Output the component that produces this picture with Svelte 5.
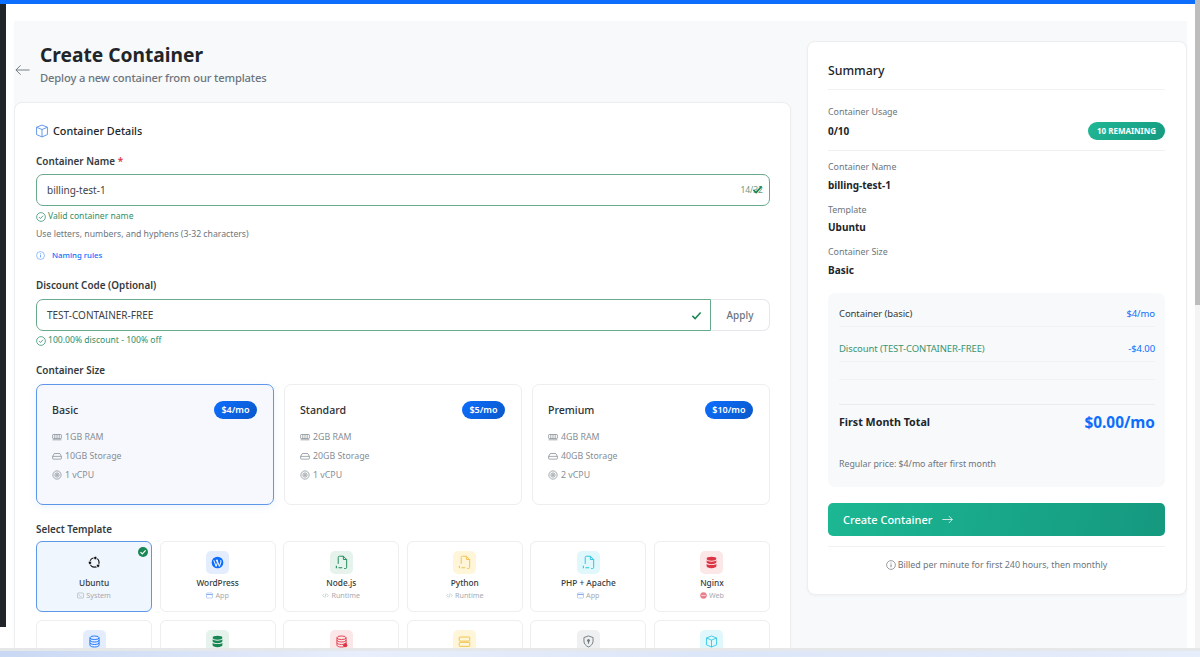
<script>
  const sizes = [
    { name: 'Basic', price: '$4/mo', ram: '1GB RAM', disk: '10GB Storage', cpu: '1 vCPU', selected: true },
    { name: 'Standard', price: '$5/mo', ram: '2GB RAM', disk: '20GB Storage', cpu: '1 vCPU' },
    { name: 'Premium', price: '$10/mo', ram: '4GB RAM', disk: '40GB Storage', cpu: '2 vCPU' }
  ];
  const templates = [
    { name: 'Ubuntu', type: 'System', tint: 'none', icon: 'ubuntu', kind: 'term', selected: true, kc: '#9aa3ad' },
    { name: 'WordPress', type: 'App', tint: '#e3edfd', icon: 'wp', color: '#0d6efd', kind: 'app', kc: '#7fa8ea' },
    { name: 'Node.js', type: 'Runtime', tint: '#e6f2ec', icon: 'file', color: '#198754', kind: 'code', kc: '#8fb8a4' },
    { name: 'Python', type: 'Runtime', tint: '#fff6da', icon: 'file', color: '#f0c14b', kind: 'code', kc: '#8fb8a4' },
    { name: 'PHP + Apache', type: 'App', tint: '#e0f8fc', icon: 'php', color: '#25c2e0', kind: 'app', kc: '#7fa8ea' },
    { name: 'Nginx', type: 'Web', tint: '#fbe6e8', icon: 'dbfill', color: '#dc3545', kind: 'web', kc: '#e8808c' },
    { name: '', type: '', tint: '#e3edfd', icon: 'db', color: '#0d6efd' },
    { name: '', type: '', tint: '#e6f2ec', icon: 'dbfill', color: '#198754' },
    { name: '', type: '', tint: '#fbe6e8', icon: 'dbdot', color: '#dc3545' },
    { name: '', type: '', tint: '#fff6da', icon: 'server', color: '#f0c14b' },
    { name: '', type: '', tint: '#eff0f2', icon: 'shield', color: '#6c757d' },
    { name: '', type: '', tint: '#e0f8fc', icon: 'box', color: '#25c2e0' }
  ];
</script>

{#snippet check(cls)}
  <svg class={cls} viewBox="0 0 16 16" fill="none" stroke="currentColor" stroke-width="1.2"><circle cx="8" cy="8" r="7"/><path d="M4.8 8.2l2.2 2.2 4.2-4.4" stroke-width="1.3"/></svg>
{/snippet}
{#snippet info(cls)}
  <svg class={cls} viewBox="0 0 16 16" fill="none" stroke="currentColor" stroke-width="1.1"><circle cx="8" cy="8" r="7"/><path d="M8 7v4.5" stroke-width="1.4"/><circle cx="8" cy="4.7" r=".9" fill="currentColor" stroke="none"/></svg>
{/snippet}
{#snippet box(cls)}
  <svg class={cls} viewBox="0 0 16 16" fill="none" stroke="currentColor" stroke-width="1.1" stroke-linejoin="round"><path d="M8 1.2l6.2 2.5v8.4L8 14.8 1.8 12.1V3.7z"/><path d="M1.8 3.7L8 6.3l6.2-2.6M8 6.3v8.5"/></svg>
{/snippet}
{#snippet tileIcon(t)}
  {#if t.icon === 'ubuntu'}
    <svg class="tile-svg" viewBox="0 0 16 16" fill="none"><circle cx="8" cy="8" r="5.6" stroke="#111" stroke-width="1.5"/><g fill="#111" stroke="#f0f6fe" stroke-width="1"><circle cx="9" cy="2.4" r="2.1"/><circle cx="2.4" cy="8.4" r="2.1"/><circle cx="12.4" cy="12" r="2.1"/></g></svg>
  {:else if t.icon === 'wp'}
    <svg class="tile-svg" viewBox="0 0 16 16"><circle cx="8" cy="8" r="7.2" fill={t.color}/><path d="M3.4 5.2l2.9 7.6 1.6-4.4-1-3M6 5.2h2.6M7.6 5.4l2.7 7.4 1.9-5.4c.4-1.2-.2-2-.6-2.4" fill="none" stroke="#fff" stroke-width="1.2"/></svg>
  {:else if t.icon === 'file' || t.icon === 'php'}
    <svg class="tile-svg wide" viewBox="0 0 16 16" fill="none" stroke={t.color} stroke-width="1"><path d="M4.5 9.5V2.5A1.2 1.2 0 0 1 5.7 1.3h4.3l3.5 3.5v8.4a1.2 1.2 0 0 1-1.2 1.2h-1.5"/><path d="M10 1.3v3.5h3.5"/><path d="M2.5 11.5v2.6M4.8 13.7h4" stroke-width="1.1"/></svg>
  {:else if t.icon === 'dbfill'}
    <svg class="tile-svg" viewBox="0 0 16 16" fill={t.color}><ellipse cx="8" cy="3.4" rx="6" ry="2.4"/><path d="M2 5.2v2.4c0 1.3 2.7 2.4 6 2.4s6-1.1 6-2.4V5.2c-1 1.2-3.3 1.8-6 1.8s-5-.6-6-1.8z"/><path d="M2 9.4v3.2c0 1.3 2.7 2.4 6 2.4s6-1.1 6-2.4V9.4c-1 1.2-3.3 1.8-6 1.8s-5-.6-6-1.8z"/></svg>
  {:else if t.icon === 'db' || t.icon === 'dbdot'}
    <svg class="tile-svg" viewBox="0 0 16 16" fill="none" stroke={t.color} stroke-width="1.1"><ellipse cx="8" cy="3.4" rx="5.6" ry="2.2"/><path d="M2.4 3.4v9.2c0 1.2 2.5 2.2 5.6 2.2s5.6-1 5.6-2.2V3.4"/><path d="M2.4 6.4c0 1.2 2.5 2.2 5.6 2.2s5.6-1 5.6-2.2M2.4 9.5c0 1.2 2.5 2.2 5.6 2.2s5.6-1 5.6-2.2"/>{#if t.icon === 'dbdot'}<circle cx="12.6" cy="12.6" r="2.6" fill={t.color} stroke="none"/>{/if}</svg>
  {:else if t.icon === 'server'}
    <svg class="tile-svg" viewBox="0 0 16 16" fill="none" stroke={t.color} stroke-width="1.2"><rect x="1.5" y="2.5" width="13" height="5" rx="1"/><rect x="1.5" y="9" width="13" height="5" rx="1"/></svg>
  {:else if t.icon === 'shield'}
    <svg class="tile-svg" viewBox="0 0 16 16" fill="none" stroke={t.color} stroke-width="1.1"><path d="M8 1.2l5.6 1.9v4.4c0 3.4-2.4 5.9-5.6 7.3-3.2-1.4-5.6-3.9-5.6-7.3V3.1z"/><circle cx="8" cy="6.8" r="1.3" fill={t.color}/><path d="M8 7.5v3.2" stroke-width="1.4"/></svg>
  {:else}
    <svg class="tile-svg" viewBox="0 0 16 16" fill="none" stroke={t.color} stroke-width="1" stroke-linejoin="round"><path d="M8 1.2l6.2 2.5v8.4L8 14.8 1.8 12.1V3.7z"/><path d="M1.8 3.7L8 6.3l6.2-2.6M8 6.3v8.5"/></svg>
  {/if}
{/snippet}
{#snippet kindIcon(k, c)}
  <svg class="kind" viewBox="0 0 16 16" fill="none" stroke={c} stroke-width="1.2">
    {#if k === 'term'}<rect x="1.2" y="2.2" width="13.6" height="11.6" rx="1.5"/><path d="M3.6 5.4l2.4 2-2.4 2M7.5 10h3"/>
    {:else if k === 'app'}<rect x="1.2" y="2.2" width="13.6" height="11.6" rx="1.5"/><path d="M1.2 5.8h13.6" stroke-width="2.2"/>
    {:else if k === 'code'}<path d="M5 4.5L1.6 8 5 11.5M11 4.5L14.4 8 11 11.5M9.4 3l-2.8 10"/>
    {:else}<circle cx="8" cy="8" r="7" fill={c}/><path d="M3 8h10" stroke="#fff" stroke-width="1.4"/>{/if}
  </svg>
{/snippet}

<div class="screen">
  <div class="upper">
    <div class="app">
      <div class="topbar"></div>
      <div class="window">
        <div class="rail"></div>
        <div class="gutter">
          <main class="page">
            <div class="col-main">
              <header class="head">
                <svg class="back" viewBox="0 0 16 12" fill="none" stroke="#6c757d" stroke-width="1"><path d="M15.5 6H1M6 1L1 6l5 5"/></svg>
                <div>
                  <h1>Create Container</h1>
                  <p>Deploy a new container from our templates</p>
                </div>
              </header>
              <section class="card details">
                <h2>{@render box('cube')}Container Details</h2>

                <div class="lbl first">Container Name <span class="req">*</span></div>
                <div class="field">
                  <span class="val">billing-test-1</span>
                  <span class="count">14/32</span>
                  <svg class="tick over" viewBox="0 0 16 16"><path d="M2 8.5l4 4 8-9" fill="none" stroke="#198754" stroke-width="2.4"/></svg>
                </div>
                <div class="ok valid">{@render check('ico')}Valid container name</div>
                <div class="hint">Use letters, numbers, and hyphens (3-32 characters)</div>
                <div class="rules">{@render info('ico')}<span>Naming rules</span></div>

                <div class="lbl second">Discount Code (Optional)</div>
                <div class="group">
                  <div class="field flat">
                    <span class="val">TEST-CONTAINER-FREE</span>
                    <svg class="tick" viewBox="0 0 16 16"><path d="M2 8.5l4 4 8-9" fill="none" stroke="#198754" stroke-width="2.2"/></svg>
                  </div>
                  <button class="apply">Apply</button>
                </div>
                <div class="ok">{@render check('ico')}100.00% discount - 100% off</div>

                <div class="lbl third">Container Size</div>
                <div class="sizes">
                  {#each sizes as s}
                    <div class="size" class:on={s.selected}>
                      <div class="size-top"><span class="size-name">{s.name}</span><span class="price">{s.price}</span></div>
                      <div class="spec">
                        <svg viewBox="0 0 16 12" fill="none" stroke="currentColor" stroke-width="1.1"><rect x="1" y="2" width="14" height="6.5" rx="1"/><path d="M4.5 2v6.5M8 2v6.5M11.5 2v6.5M1 10.5h14"/></svg>{s.ram}
                      </div>
                      <div class="spec">
                        <svg viewBox="0 0 16 12" fill="none" stroke="currentColor" stroke-width="1.1"><path d="M3.6 2h8.8L15 6.6V10a1 1 0 0 1-1 1H2a1 1 0 0 1-1-1V6.6zM1 6.6h14"/></svg>{s.disk}
                      </div>
                      <div class="spec">
                        <svg viewBox="0 0 16 16" fill="none" stroke="currentColor" stroke-width="1.1"><circle cx="8" cy="8" r="6.6"/><circle cx="8" cy="8" r="3.4"/><circle cx="8" cy="8" r="1.4"/></svg>{s.cpu}
                      </div>
                    </div>
                  {/each}
                </div>

                <div class="lbl fourth">Select Template</div>
                <div class="tpls">
                  {#each templates as t}
                    <div class="tpl" class:on={t.selected}>
                      {#if t.selected}
                        <span class="badge-ok"><svg viewBox="0 0 10 10"><path d="M2.5 5.2l1.8 1.8 3.3-3.6" fill="none" stroke="#fff" stroke-width="1.2"/></svg></span>
                      {/if}
                      <div class="tile" style:background={t.tint === 'none' ? 'transparent' : t.tint}>{@render tileIcon(t)}</div>
                      <div class="tpl-name">{t.name}</div>
                      {#if t.type}<div class="tpl-type">{@render kindIcon(t.kind, t.kc)}{t.type}</div>{/if}
                    </div>
                  {/each}
                </div>
              </section>
            </div>

            <aside class="card summary">
              <h3>Summary</h3>
              <div class="k usage-k">Container Usage</div>
              <div class="usage">
                <strong>0/10</strong><span class="remain">10 REMAINING</span>
              </div>
              <div class="k name-k">Container Name</div>
              <div class="v">billing-test-1</div>
              <div class="k">Template</div>
              <div class="v">Ubuntu</div>
              <div class="k">Container Size</div>
              <div class="v">Basic</div>

              <div class="bill">
                <div class="row"><span class="dark">Container (basic)</span><span class="blue">$4/mo</span></div>
                <div class="row"><span class="green">Discount (TEST-CONTAINER-FREE)</span><span class="blue">-$4.00</span></div>
                <div class="row spacer"></div>
                <div class="total"><strong>First Month Total</strong><span>$0.00/mo</span></div>
                <div class="regular">Regular price: $4/mo after first month</div>
              </div>

              <button class="create">Create Container
                <svg viewBox="0 0 16 12" fill="none" stroke="#fff" stroke-width="1.1"><path d="M.5 6H15M10 1l5 5-5 5"/></svg>
              </button>
              <div class="billed">{@render info('ico')}Billed per minute for first 240 hours, then monthly</div>
            </aside>
          </main>
        </div>
      </div>
    </div>
    <div class="scroll"><div class="thumb"></div></div>
  </div>
  <div class="taskbar"></div>
</div>

<style>
  :global(body) { margin: 0; background: #fff; }
  * { box-sizing: border-box; }
  .screen { width: 1200px; height: 657px; display: flex; flex-direction: column; overflow: hidden; background: #fff; font-family: "Noto Sans", sans-serif; color: #212529; }
  .upper { flex: 1; min-height: 0; display: flex; }
  .app { flex: 1; min-width: 0; display: flex; flex-direction: column; }
  .topbar { height: 4px; background: #0d6efd; flex: none; }
  .window { flex: 1; min-height: 0; display: flex; }
  .rail { width: 6px; height: 623px; background: #212529; flex: none; }
  .gutter { flex: 1; min-width: 0; padding: 17px 8px 0 8px; overflow: hidden; }
  .page { background: #f8f9fa; display: flex; align-items: flex-start; gap: 16px; height: 700px; }
  .col-main { width: 777px; flex: none; }
  .head { display: flex; align-items: flex-start; height: 81px; padding-top: 20px; }
  .back { width: 15px; height: 12px; margin: 23px 10px 0 1px; flex: none; }
  h1 { margin: 0; font-size: 19.2px; line-height: 28px; font-weight: 700; color: #212529; }
  .head p { margin: 1px 0 0; font-size: 11.2px; line-height: 16px; letter-spacing: -.15px; color: #6c757d; font-weight: 500; }
  .card { background: #fff; border: 1px solid #eceef0; border-radius: 8px; box-shadow: 0 1px 3px rgba(0,0,0,.04); }
  .details { padding: 19px 20px 19px 21px; height: 640px; }
  h2 { margin: 0; display: flex; align-items: center; font-size: 10.8px; line-height: 18px; font-weight: 500; color: #212529; }
  .cube { width: 14px; height: 14px; color: #5f97e8; margin: 0 4px 0 -1px; }
  .lbl { font-size: 9.9px; line-height: 14px; font-weight: 600; color: #343a40; }
  .first { margin-top: 14px; }
  .second { margin-top: 16px; }
  .third { margin-top: 16px; }
  .fourth { margin-top: 17px; }
  .req { color: #dc3545; }
  .field { position: relative; height: 32px; margin-top: 6px; border: 1px solid #69a98c; border-radius: 7px; display: flex; align-items: center; padding-left: 10px; font-size: 10px; color: #3d4349; background: #fff; }
  .val { flex: 1; }
  .count { position: absolute; right: 6px; top: 9px; font-size: 8.5px; color: #6c9a85; }
  .tick { width: 11px; height: 11px; margin-right: 8px; }
  .tick.over { position: absolute; right: -2px; top: 9px; }
  .group { display: flex; margin-top: 7px; }
  .flat { flex: 1; margin: 0; border-radius: 7px 0 0 7px; }
  .apply { width: 59px; height: 32px; border: 1px solid #e5e7ea; border-left: 0; border-radius: 0 7px 7px 0; background: #fff; font: 500 10px "Noto Sans", sans-serif; color: #6c757d; padding: 0; }
  .ok { display: flex; align-items: center; gap: 2px; margin-top: 3px; font-size: 8.6px; line-height: 13px; color: #2f8f69; }
  .ok.valid { margin-top: 4px; }
  .ico { width: 10px; height: 10px; flex: none; }
  .hint { margin-top: 5px; font-size: 8.7px; line-height: 13px; color: #6c757d; }
  .rules { display: flex; align-items: center; gap: 7px; margin-top: 8px; font-size: 7.8px; line-height: 13px; color: #0d6efd; font-weight: 500; }
  .rules .ico { width: 9px; height: 9px; opacity: .7; }
  .sizes { display: grid; grid-template-columns: repeat(3, 1fr); gap: 10px; margin-top: 7px; }
  .size { height: 121px; border: 1px solid #eceef0; border-radius: 7px; padding: 15px 16px 14px 15px; background: #fff; }
  .size.on { border-color: #5f97e8; background: #f6f8fd; box-shadow: 0 2px 8px rgba(13,110,253,.08); }
  .size-top { display: flex; justify-content: space-between; align-items: center; height: 20px; margin-bottom: 7px; }
  .size-name { font-size: 10.6px; font-weight: 500; color: #2b3036; }
  .price { height: 18px; border-radius: 9px; padding: 0 7.5px; font-size: 9px; line-height: 18px; font-weight: 600; color: #fff; background: linear-gradient(135deg, #0d6efd, #0a58ca); }
  .spec { display: flex; align-items: center; gap: 3px; height: 19px; font-size: 8.8px; color: #868e96; }
  .spec svg { width: 10px; height: 10px; flex: none; color: #7b838b; }
  .tpls { display: grid; grid-template-columns: repeat(6, 1fr); gap: 8px 7.4px; margin-top: 5px; }
  .tpl { position: relative; height: 71px; border: 1px solid #eceef0; border-radius: 6px; background: #fff; display: flex; flex-direction: column; align-items: center; padding-top: 9px; }
  .tpl.on { border-color: #5f97e8; background: #f0f6fe; }
  .tile { width: 23px; height: 23px; border-radius: 5px; display: flex; align-items: center; justify-content: center; flex: none; }
  .tile-svg { width: 13px; height: 13px; }
  .tile-svg.wide { width: 15px; height: 15px; }
  .tpl-name { margin-top: 2px; font-size: 8.3px; line-height: 13px; font-weight: 500; color: #343a40; white-space: nowrap; }
  .tpl-type { display: flex; align-items: center; gap: 2px; font-size: 7.2px; line-height: 13px; color: #a5abb1; }
  .kind { width: 7px; height: 7px; }
  .badge-ok { position: absolute; right: 3px; top: 5px; width: 10px; height: 10px; border-radius: 50%; background: #198754; display: flex; }
  .badge-ok svg { width: 10px; height: 10px; }
  .summary { margin-top: 20px; width: 380px; flex: none; height: 554px; padding: 19px 21px 0 20px; }
  h3 { margin: 0; font-size: 12.3px; line-height: 20px; font-weight: 500; color: #212529; padding-bottom: 8px; border-bottom: 1px solid #f1f2f4; }
  .k { font-size: 8.9px; line-height: 14px; color: #6c757d; margin-top: 11px; }
  .usage-k { margin-top: 15px; }
  .name-k { margin-top: 9px; }
  .usage { display: flex; justify-content: space-between; align-items: center; padding: 2px 0 10px; border-bottom: 1px solid #eef0f2; height: 32px; }
  .usage strong { font-size: 10px; font-weight: 700; }
  .remain { height: 18px; padding: 0 9px; border-radius: 9px; font-size: 8px; line-height: 18px; font-weight: 700; color: #fff; background: linear-gradient(135deg, #20b795, #159a80); }
  .v { font-size: 10px; line-height: 14px; margin-top: 3.5px; font-weight: 700; color: #212529; }
  .bill { margin-top: 16px; height: 194px; background: #f8f9fa; border-radius: 7px; padding: 0 10px 0 11px; }
  .row { display: flex; justify-content: space-between; align-items: center; height: 34.5px; padding: 14.5px 0 5px; line-height: 14px; border-bottom: 1px solid #f1f2f4; font-size: 9.5px; letter-spacing: -.1px; }
  .row.spacer { height: 18px; padding: 0; }
  .dark { color: #343a40; }
  .green { color: #3a9471; }
  .blue { color: #0d6efd; }
  .total { display: flex; justify-content: space-between; align-items: center; margin-top: 24px; height: 36px; border-top: 1px solid #e9ecef; }
  .total strong { font-size: 10.7px; font-weight: 700; }
  .total span { font-size: 15.4px; font-weight: 700; color: #0d6efd; }
  .regular { margin-top: 17px; font-size: 8.8px; line-height: 14px; color: #6c757d; }
  .create { display: flex; align-items: center; gap: 10px; width: 100%; height: 33px; margin-top: 16px; padding: 0 0 0 15px; border: 0; border-radius: 5px; background: linear-gradient(100deg, #1cb793, #159a80 95%); color: #fff; font: 500 11px "Noto Sans", sans-serif; }
  .create svg { width: 11px; height: 9px; }
  .billed { display: flex; align-items: center; justify-content: center; gap: 2px; margin-top: 10px; padding-top: 10px; border-top: 1px solid #f1f2f4; font-size: 8.9px; line-height: 16px; color: #6c757d; }
  .scroll { width: 5px; background: #f4f4f4; flex: none; }
  .thumb { height: 305px; background: #bdbdbd; }
  .taskbar { height: 9px; flex: none; border-top: 3px solid #e6e7e9; background: linear-gradient(90deg, #c9d8f3, #e8eefb 30%, #dbe6f8 60%, #e6edfb); }
</style>
